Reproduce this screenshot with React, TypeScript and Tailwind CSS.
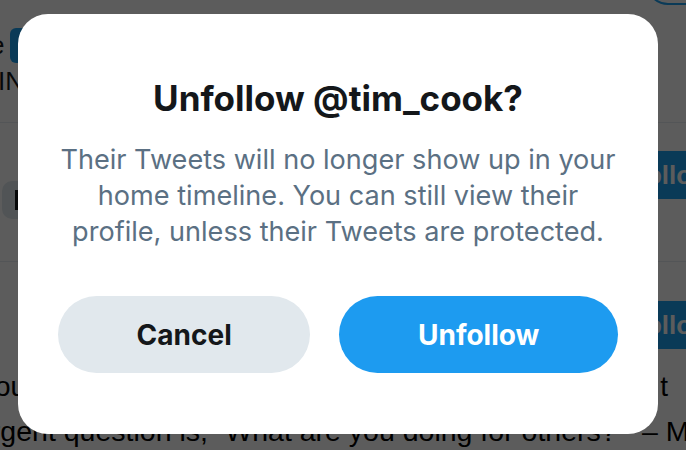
export default function App() {
  return (
    <div className="relative h-[450px] w-[686px] overflow-hidden bg-white font-['Liberation_Sans',sans-serif] text-[#14171a]">
      {/* page behind the dialog */}
      <div className="flex flex-col">
        <div className="relative h-[123px] border-b border-[#e6ecf0]">
          <div className="absolute right-[-50px] top-[-39px] h-[44px] w-[90px] rounded-full border-2 border-[#1da1f2]" />
          <div className="flex items-center gap-[6px] pt-[27px] text-[26px] leading-[36px]">
            <span className="ml-[-10px]">e</span>
            <span className="h-[35px] w-[60px] rounded-[6px] bg-[#1da1f2]" />
          </div>
          <div className="ml-[-2px] text-[26px] leading-[36px]">IN</div>
        </div>
        <div className="flex h-[139px] items-start justify-between border-b border-[#e6ecf0]">
          <div className="ml-[2px] mt-[58px] flex h-[38px] w-[60px] items-center rounded-[10px] bg-[#e1e8ed] pl-[13px]">
            <span className="h-[20px] w-[6px] bg-[#14171a]" />
          </div>
          <div className="mr-[-100px] mt-[28px] flex h-[48px] w-[156px] items-center rounded-full bg-[#1da1f2] text-[26px] font-bold text-white">
            Following
          </div>
        </div>
        <div className="flex h-[103px] items-start justify-end">
          <div className="mr-[-100px] mt-[39px] flex h-[48px] w-[156px] items-center rounded-full bg-[#1da1f2] text-[26px] font-bold text-white">
            Following
          </div>
        </div>
        <div className="flex justify-between whitespace-nowrap text-[28px] leading-[44px] text-black">
          <span className="ml-[-5px]">ou</span>
          <span className="mr-[18px]">t</span>
        </div>
        <div className="ml-[-25px] whitespace-nowrap text-[28.5px] leading-[44px] text-black">
          urgent question is, “What are you doing for others?” &nbsp;– Martin
        </div>
      </div>

      {/* dim overlay + dialog */}
      <div className="absolute inset-0 flex items-start justify-start bg-black/[0.64] pl-[18px] pt-[14px]">
        <div className="flex w-[640px] flex-col rounded-[30px] bg-white px-[40px] pb-[61px] pt-[64px] font-['Inter',sans-serif]">
          <h2 className="text-center text-[35px] font-bold leading-[40px] text-[#14171a]">
            Unfollow @tim_cook?
          </h2>
          <p className="mt-[24px] text-center text-[27.1px] leading-[36px] text-[#5b7083]">
            Their Tweets will no longer show up in your home timeline. You can still view their profile, unless their Tweets are protected.
          </p>
          <div className="mt-[46px] flex gap-[29px]">
            <button className="h-[77px] flex-auto rounded-full bg-[#e1e8ed] text-[28px] font-bold text-[#14171a]">
              Cancel
            </button>
            <button className="h-[77px] flex-auto rounded-full bg-[#1d9bf0] text-[28px] font-bold text-white">
              Unfollow
            </button>
          </div>
        </div>
      </div>
    </div>
  );
}
